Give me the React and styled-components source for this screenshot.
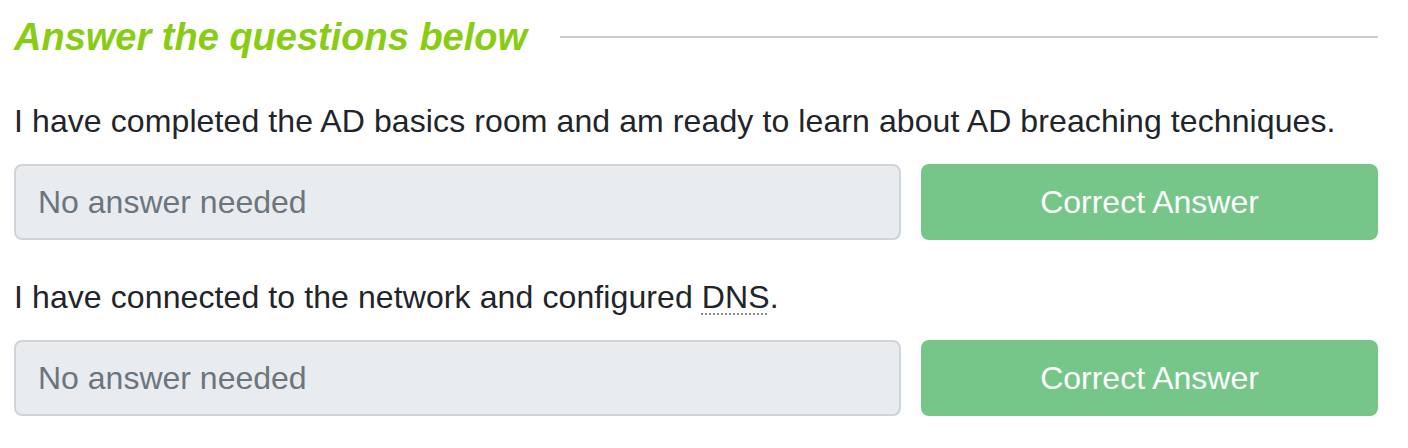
import React from 'react';
import styled, { createGlobalStyle } from 'styled-components';

const GlobalStyle = createGlobalStyle`
  body {
    margin: 0;
    background: #ffffff;
    font-family: "Liberation Sans", Arial, sans-serif;
    color: #212529;
  }
`;

const Panel = styled.section`
  padding: 14px 30px 0 14px;
`;

const HeaderRow = styled.div`
  display: flex;
  align-items: center;
  margin-bottom: 37px;
`;

const Heading = styled.h4`
  margin: 0;
  font-size: 38px;
  line-height: 46px;
  font-style: italic;
  font-weight: 700;
  color: #88cc14;
  white-space: nowrap;
`;

const Rule = styled.div`
  flex: 1;
  height: 2px;
  margin-left: 33px;
  background: #cccccc;
`;

const Question = styled.div`
  margin-bottom: 33px;
`;

const Prompt = styled.p`
  margin: 0 0 19px;
  font-size: 32px;
  line-height: 48px;
  letter-spacing: 0.1px;
`;

const Abbr = styled.abbr`
  text-decoration: underline dotted #8a8a8a;
  text-decoration-thickness: 2px;
  text-underline-offset: 5px;
  cursor: help;
`;

const AnswerRow = styled.form`
  display: grid;
  grid-template-columns: 1fr 457px;
  gap: 20px;
`;

const AnswerInput = styled.input`
  box-sizing: border-box;
  height: 76px;
  padding: 0 22px;
  border: 2px solid #ced4da;
  border-radius: 8px;
  background: #e9ecef;
  font-family: inherit;
  font-size: 32px;
  color: #495057;
  outline: none;

  &::placeholder {
    color: #6c757d;
    opacity: 1;
  }
`;

const SubmitButton = styled.button`
  height: 76px;
  border: none;
  border-radius: 8px;
  background: #76c68a;
  color: #ffffff;
  font-family: inherit;
  font-size: 32px;
  cursor: default;
`;

const questions = [
  { id: 1, text: 'I have completed the AD basics room and am ready to learn about AD breaching techniques.' },
  {
    id: 2,
    text: (
      <>
        I have connected to the network and configured <Abbr title="Domain Name System">DNS</Abbr>.
      </>
    ),
  },
];

export default function App() {
  return (
    <>
      <GlobalStyle />
      <Panel>
        <HeaderRow>
          <Heading>Answer the questions below</Heading>
          <Rule />
        </HeaderRow>
        {questions.map(q => (
          <Question key={q.id}>
            <Prompt>{q.text}</Prompt>
            <AnswerRow onSubmit={e => e.preventDefault()}>
              <AnswerInput readOnly placeholder="No answer needed" />
              <SubmitButton type="submit">Correct Answer</SubmitButton>
            </AnswerRow>
          </Question>
        ))}
      </Panel>
    </>
  );
}
